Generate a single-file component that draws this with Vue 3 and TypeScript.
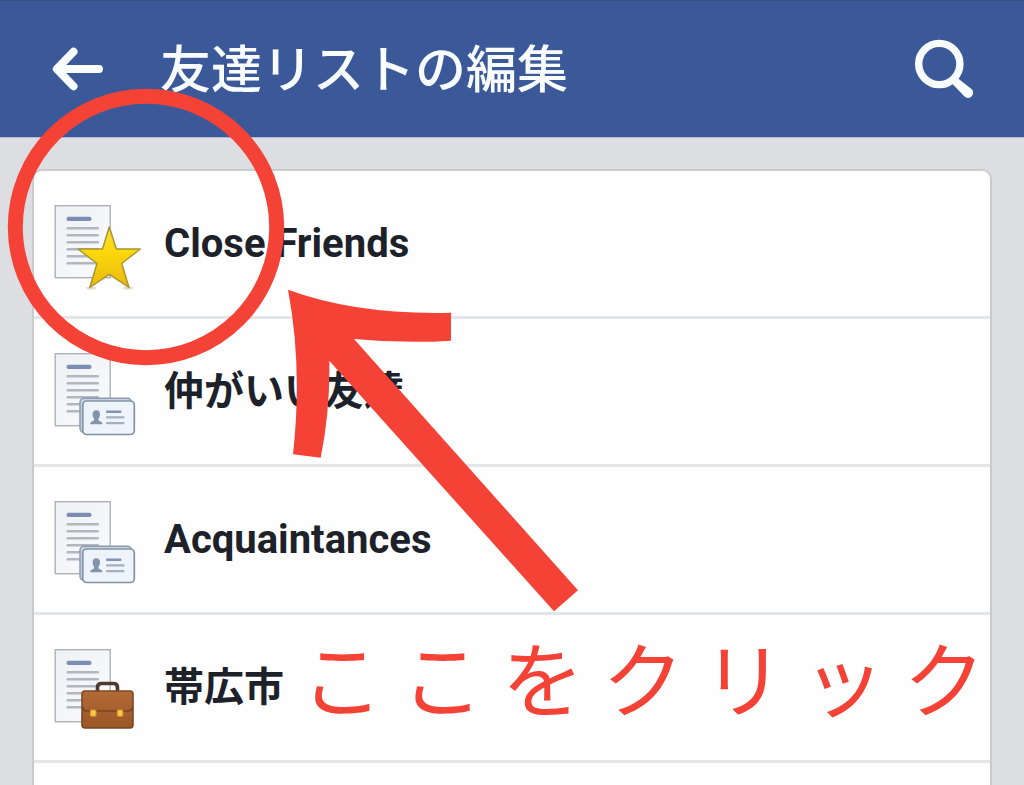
<script setup lang="ts">
type IconKind = 'star' | 'cards' | 'briefcase'

interface FriendList {
  id: number
  name: string
  icon: IconKind
}

const title = '友達リストの編集'
const callout = 'こ こ を ク リ ッ ク'

const lists: FriendList[] = [
  { id: 1, name: 'Close Friends', icon: 'star' },
  { id: 2, name: '仲がいい友達', icon: 'cards' },
  { id: 3, name: 'Acquaintances', icon: 'cards' },
  { id: 4, name: '帯広市', icon: 'briefcase' },
]

const textLines: number[] = [31, 38, 45, 52, 59, 66]
</script>

<template>
  <div class="page">
    <header class="bar">
      <button class="bar-button" type="button" aria-label="戻る">
        <svg class="back-icon" viewBox="0 0 52 60" aria-hidden="true">
          <path d="M21.5 12.7 4.8 30l16.7 17.3M6 30h41" fill="none" stroke="#f8fcff" stroke-width="8" stroke-linecap="round" stroke-linejoin="round" />
          <path d="M5 30 14 22v16z" fill="#f8fcff" />
        </svg>
      </button>
      <h1 class="title">{{ title }}</h1>
      <button class="bar-button" type="button" aria-label="検索">
        <svg class="search-icon" viewBox="0 0 60 60" aria-hidden="true">
          <circle cx="25.3" cy="25" r="20.6" fill="none" stroke="#f8fcff" stroke-width="7.4" />
          <path d="M38 44.5 43.5 39 57.5 50A5 5 0 0 1 50.5 57.5Z" fill="#f8fcff" />
        </svg>
      </button>
    </header>

    <main class="content">
      <ul class="card">
        <li v-for="list in lists" :key="list.id" class="item">
          <a class="row" href="#">
            <svg class="list-icon" viewBox="0 0 88 93" aria-hidden="true">
              <defs>
                <linearGradient :id="`paper-${list.id}`" x1="0" y1="0" x2="1" y2="1">
                  <stop offset="0" stop-color="#eef0f4" />
                  <stop offset="1" stop-color="#fafbfd" />
                </linearGradient>
                <linearGradient :id="`gold-${list.id}`" x1="0" y1="0" x2="0" y2="1">
                  <stop offset="0" stop-color="#f8dc3c" />
                  <stop offset="0.4" stop-color="#fbd90a" />
                  <stop offset="1" stop-color="#e9b90e" />
                </linearGradient>
                <linearGradient :id="`leather-${list.id}`" x1="0" y1="0" x2="0" y2="1">
                  <stop offset="0" stop-color="#b26a36" />
                  <stop offset="1" stop-color="#9a5627" />
                </linearGradient>
              </defs>
              <rect x="1.2" y="8.7" width="55" height="72" :fill="`url(#paper-${list.id})`" stroke="#a9acb2" stroke-width="1.3" />
              <rect x="12.5" y="19.8" width="25" height="4.2" rx="2" fill="#7b8db3" />
              <rect v-for="y in textLines" :key="y" x="12.5" :y="y - 1" width="32.5" height="2.4" rx="1.2" fill="#b2b6be" />

              <g v-if="list.icon === 'star'">
                <ellipse cx="37" cy="91" rx="5" ry="1.5" fill="#e2dacd" />
                <ellipse cx="74" cy="91" rx="5" ry="1.5" fill="#e2dacd" />
                <path d="M55.3 30 62.3 52h24L67.7 66.5 75 90.5 55.3 77.3 35.8 90.5 43 66.5 24 52h24.5Z" :fill="`url(#gold-${list.id})`" stroke="#a99532" stroke-width="1.5" stroke-linejoin="round" />
              </g>

              <g v-else-if="list.icon === 'cards'">
                <rect x="26" y="53.3" width="51.5" height="34" rx="4" fill="#c9d4e2" stroke="#8f9cae" stroke-width="1.5" />
                <rect x="28.8" y="56" width="51.5" height="33.5" rx="4" fill="#edf4fc" stroke="#8492a6" stroke-width="1.7" />
                <path d="M42.3 65.3c2.6 0 3.8 1.9 3.7 4.2 0 2-.8 3.2-1.5 4v1.8c.6 1 3.8 1.2 4 4H36.2c.1-2.8 3.3-3 3.9-4v-1.8c-.8-.8-1.5-2-1.5-4 0-2.3 1.1-4.2 3.7-4.2Z" fill="#8293ab" />
                <rect x="52" y="65.5" width="15.5" height="2.5" rx="1" fill="#8493b0" />
                <rect x="52" y="71.2" width="18.5" height="2.4" rx="1" fill="#a5afbd" />
                <rect x="52" y="76.9" width="18.5" height="2.4" rx="1" fill="#a5afbd" />
              </g>

              <g v-else>
                <path d="M43.5 51v-4.5q0-4 4-4h12q4 0 4 4V51" fill="none" stroke="#4f392f" stroke-width="3.6" />
                <rect x="28" y="50" width="51" height="37" rx="3" :fill="`url(#leather-${list.id})`" stroke="#7a4826" stroke-width="1.6" />
                <path d="M28.5 66q1 4 5 4h40q4 0 5-4" fill="none" stroke="#784421" stroke-width="1.7" />
                <rect x="36.5" y="69" width="5.5" height="6.2" rx="1" fill="#f7c548" stroke="#d99a26" stroke-width="1" />
                <rect x="63.3" y="69" width="5.5" height="6.2" rx="1" fill="#f7c548" stroke="#d99a26" stroke-width="1" />
              </g>
            </svg>
            <span class="name">{{ list.name }}</span>
          </a>
        </li>
      </ul>
    </main>

    <svg class="marks" width="600" height="620" viewBox="0 0 600 620" aria-hidden="true">
      <circle cx="146" cy="227" r="130.7" fill="none" stroke="#f44336" stroke-width="15" />
      <path d="M288 289.7Q357 315 451 312.7V340.7Q403 343.7 354 339L578 590.3 554 611.3 329.3 360.7Q330.3 410 320.7 457.7L293 454.3Q302.7 366.7 288 289.7Z" fill="#f44336" />
    </svg>
    <p class="callout">{{ callout }}</p>
  </div>
</template>

<style>
body {
  margin: 0;
}
</style>

<style scoped>
.page {
  position: relative;
  display: flex;
  flex-direction: column;
  height: 100vh;
  overflow: hidden;
  background: #dddee2;
  font-family: Roboto, "Noto Sans CJK JP", sans-serif;
}

.bar {
  display: flex;
  align-items: center;
  box-sizing: border-box;
  padding: 30px 50px 29px 52px;
  border-bottom: 1px solid #b4b8d8;
  background: #3b5998;
  box-shadow: inset 0 1px 0 #365085;
}

.bar-button {
  display: flex;
  padding: 0;
  border: 0;
  background: none;
  cursor: pointer;
}

.back-icon {
  width: 52px;
  height: 60px;
}

.search-icon {
  width: 60px;
  height: 60px;
  overflow: visible;
}

.title {
  flex: 1;
  margin: 0 0 0 56px;
  padding-top: 4px;
  color: #f8fcff;
  font-size: 51px;
  font-weight: 500;
  line-height: 74px;
  white-space: nowrap;
}

.content {
  display: flex;
  flex: 1;
  flex-direction: column;
  padding: 31px 32px 0;
}

.card {
  flex: 1;
  margin: 0;
  padding: 0;
  border: 2px solid #cacbce;
  border-bottom: 0;
  border-radius: 10px 10px 0 0;
  background: #fefefe;
  list-style: none;
}

.item {
  border-bottom: 3px solid #e4e5e6;
}

.row {
  display: flex;
  align-items: center;
  gap: 22px;
  padding: 26px 20px;
  color: #1d2129;
  text-decoration: none;
}

.list-icon {
  flex: none;
  width: 88px;
  height: 93px;
}

.name {
  font-size: 40px;
  font-weight: 700;
  line-height: 60px;
  white-space: nowrap;
}

.marks {
  position: absolute;
  top: 0;
  left: 0;
  pointer-events: none;
}

.callout {
  position: absolute;
  top: 616px;
  left: 301px;
  margin: 0;
  color: #f44336;
  font-family: "Noto Sans CJK JP", sans-serif;
  font-size: 82px;
  font-weight: 400;
  line-height: 120px;
  white-space: nowrap;
  pointer-events: none;
}
</style>
